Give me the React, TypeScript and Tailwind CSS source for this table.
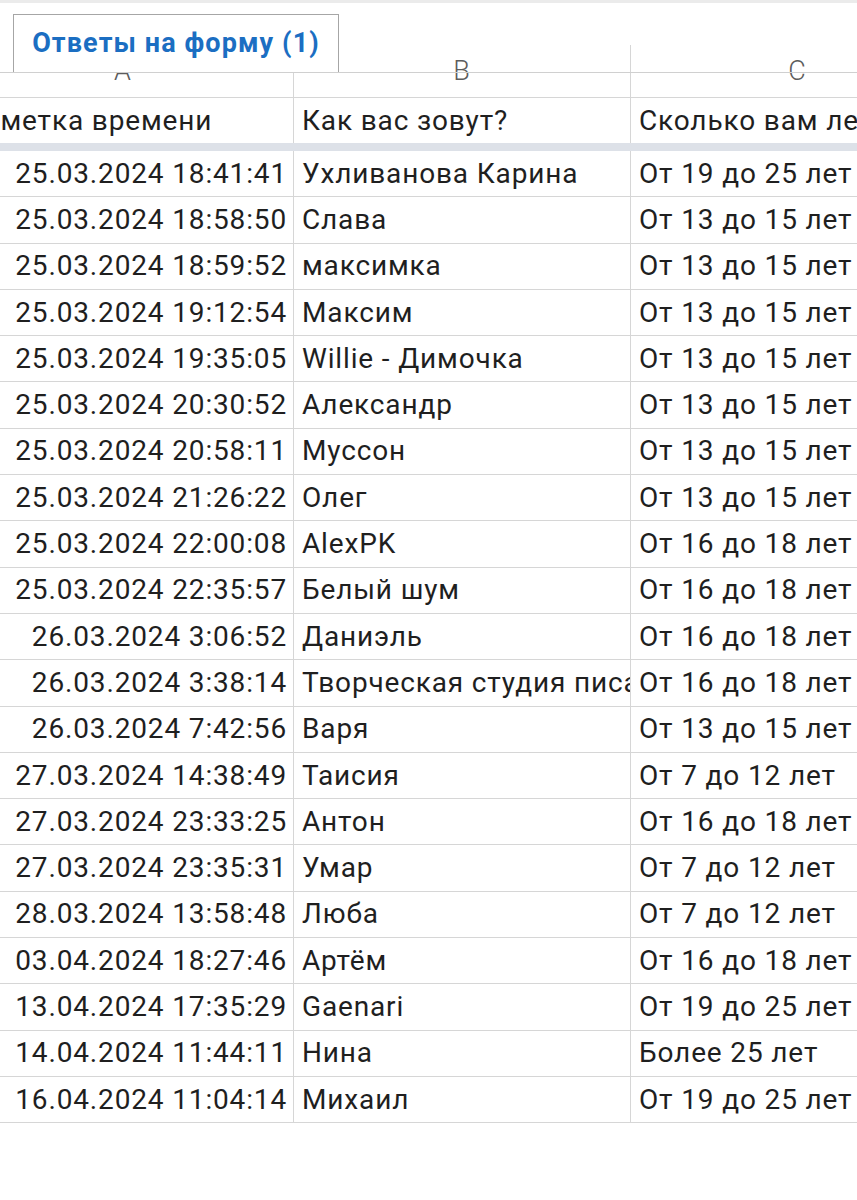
import React from "react";

const rows: [string, string, string][] = [
  ["25.03.2024 18:41:41", "Ухливанова Карина", "От 19 до 25 лет"],
  ["25.03.2024 18:58:50", "Слава", "От 13 до 15 лет"],
  ["25.03.2024 18:59:52", "максимка", "От 13 до 15 лет"],
  ["25.03.2024 19:12:54", "Максим", "От 13 до 15 лет"],
  ["25.03.2024 19:35:05", "Willie - Димочка", "От 13 до 15 лет"],
  ["25.03.2024 20:30:52", "Александр", "От 13 до 15 лет"],
  ["25.03.2024 20:58:11", "Муссон", "От 13 до 15 лет"],
  ["25.03.2024 21:26:22", "Олег", "От 13 до 15 лет"],
  ["25.03.2024 22:00:08", "AlexPK", "От 16 до 18 лет"],
  ["25.03.2024 22:35:57", "Белый шум", "От 16 до 18 лет"],
  ["26.03.2024 3:06:52", "Даниэль", "От 16 до 18 лет"],
  ["26.03.2024 3:38:14", "Творческая студия писателей", "От 16 до 18 лет"],
  ["26.03.2024 7:42:56", "Варя", "От 13 до 15 лет"],
  ["27.03.2024 14:38:49", "Таисия", "От 7 до 12 лет"],
  ["27.03.2024 23:33:25", "Антон", "От 16 до 18 лет"],
  ["27.03.2024 23:35:31", "Умар", "От 7 до 12 лет"],
  ["28.03.2024 13:58:48", "Люба", "От 7 до 12 лет"],
  ["03.04.2024 18:27:46", "Артём", "От 16 до 18 лет"],
  ["13.04.2024 17:35:29", "Gaenari", "От 19 до 25 лет"],
  ["14.04.2024 11:44:11", "Нина", "Более 25 лет"],
  ["16.04.2024 11:04:14", "Михаил", "От 19 до 25 лет"],
];

export default function App() {
  return (
    <div className="relative w-[857px] h-[1200px] bg-white overflow-hidden font-['Roboto',sans-serif] text-[#1f1f1f]">
      {/* sheet */}
      <div className="mt-[45px] ml-[-47px] w-[1012px]">
        <div className="grid grid-cols-[341px_337px_334px]">
          {["A", "B", "C"].map((l) => (
            <div
              key={l}
              className="h-[53px] border-r border-b border-[#d6d6d6] text-center text-[27px] leading-none pt-[13px] text-[#5c5c5c] font-light tracking-[1px]"
            >
              {l}
            </div>
          ))}
          <div className="h-[45px] border-r border-[#d6d6d6] flex items-center pl-[13px] text-[28px] tracking-[0.85px] whitespace-nowrap overflow-hidden">
            Отметка времени
          </div>
          <div className="h-[45px] border-r border-[#d6d6d6] flex items-center pl-[8px] text-[28px] tracking-[0.85px] whitespace-nowrap overflow-hidden">
            Как вас зовут?
          </div>
          <div className="h-[45px] border-r border-[#d6d6d6] flex items-center pl-[8px] text-[28px] tracking-[0.85px] whitespace-nowrap overflow-hidden">
            Сколько вам лет?
          </div>
          <div className="col-span-3 h-[8px] bg-[#dde1e8]" />
          {rows.map((r, i) => (
            <React.Fragment key={i}>
              <div className="h-[46.3px] border-r border-b border-[#d6d6d6] flex items-center justify-end pr-[6px] text-[28px] tracking-[0.85px] whitespace-nowrap overflow-hidden">
                {r[0]}
              </div>
              <div className="h-[46.3px] border-r border-b border-[#d6d6d6] flex items-center pl-[8px] text-[28px] tracking-[0.85px] whitespace-nowrap overflow-hidden">
                {r[1]}
              </div>
              <div className="h-[46.3px] border-r border-b border-[#d6d6d6] flex items-center pl-[8px] text-[28px] tracking-[0.85px] whitespace-nowrap overflow-hidden">
                {r[2]}
              </div>
            </React.Fragment>
          ))}
        </div>
      </div>

      {/* tab bar overlay */}
      <div className="absolute left-0 top-0 w-full h-[73px] border-b border-[#d0d0d0]">
        <div className="h-[3px] bg-[#ebebeb]" />
        <div className="ml-[13px] mt-[11px] w-[326px] h-[58px] bg-white border-l border-t border-r border-[#a6a6a6] flex items-center justify-center">
          <span className="text-[27px] font-bold text-[#1b6ec2] tracking-[1.1px] whitespace-nowrap">Ответы на форму (1)</span>
        </div>
      </div>
    </div>
  );
}
